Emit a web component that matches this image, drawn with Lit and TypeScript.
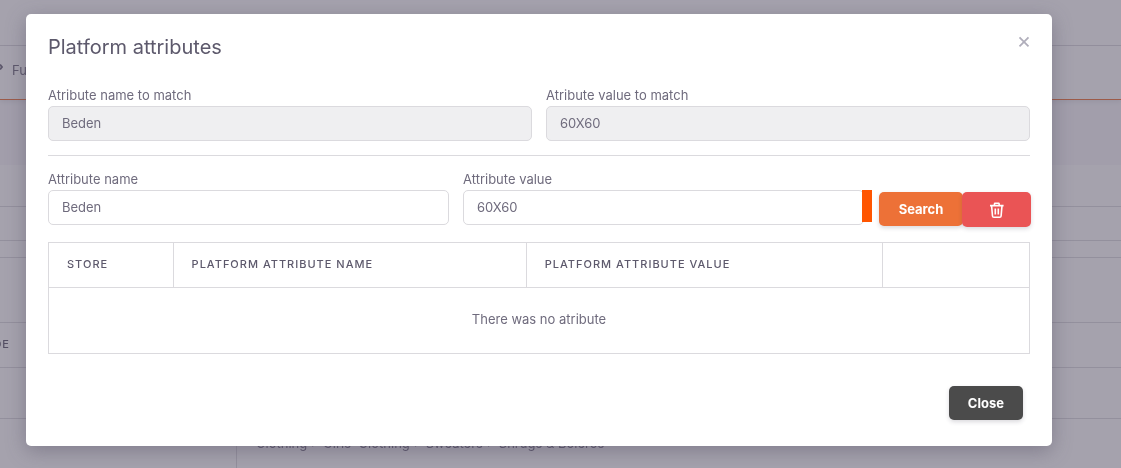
import { LitElement, html, css } from "lit";
import { customElement, state } from "lit/decorators.js";

/** Dimmed product page that stays visible behind the modal. */
@customElement("product-page")
export class ProductPage extends LitElement {
  static styles = css`
    :host {
      display: block;
      height: 100vh;
      overflow: hidden;
      background: #f8f7fa;
      color: #6f6b7d;
      will-change: transform;
    }
    .bar {
      box-sizing: border-box;
      display: flex;
      align-items: center;
      background: #fff;
      border-bottom: 1px solid #dbdade;
    }
    .top { height: 46px; }
    .menu {
      height: 54px;
      gap: 9px;
      padding-bottom: 6px;
      border-bottom-color: #ed7137;
      box-shadow: 0 2px 4px rgba(75, 70, 92, 0.1);
    }
    .arrow { width: 3px; height: 8px; margin-bottom: 6px; }
    .sheet { margin-top: 65px; }
    .h34 { height: 34px; }
    .h42 { height: 42px; }
    .h17 { height: 17px; }
    .h65 { height: 65px; }
    .h45 { height: 45px; }
    .h51 { height: 51px; }
    .code {
      width: 10px;
      display: flex;
      justify-content: flex-end;
      padding-bottom: 2px;
      overflow: hidden;
      font-size: 11px;
      font-weight: 500;
      letter-spacing: 1px;
      color: #5d596c;
    }
    .path { height: 52px; border-bottom: 0; align-items: stretch; }
    .cell { flex: 0 0 236px; border-right: 1px solid #dbdade; }
    .crumbs { padding: 14px 19px; line-height: 20px; white-space: nowrap; }
  `;

  render() {
    return html`
      <div class="bar top"></div>
      <div class="bar menu">
        <svg class="arrow" viewBox="0 0 3 8" fill="none" stroke="currentColor" stroke-width="2">
          <path d="M0 1.5 2 4 0 6.5" />
        </svg>
        <span>Fulfillment</span>
      </div>
      <div class="sheet">
        <div class="bar h42"></div>
        <div class="bar h34"></div>
        <div class="bar h17"></div>
        <div class="bar h65"></div>
        <div class="bar h45"><span class="code">DE</span></div>
        <div class="bar h51"></div>
        <div class="bar path">
          <div class="cell"></div>
          <div class="crumbs">Clothing &gt; Girls' Clothing &gt; Sweaters &gt; Shrugs &amp; Boleros</div>
        </div>
      </div>
    `;
  }
}

@customElement("app-root")
export class AppRoot extends LitElement {
  @state() private attributeName = "Beden";
  @state() private attributeValue = "60X60";

  static styles = css`
    :host {
      display: block;
      font-family: Inter, "Liberation Sans", sans-serif;
      font-size: 13px;
      line-height: 20px;
      color: #6f6b7d;
    }
    .backdrop {
      position: fixed;
      inset: 0;
      overflow: auto;
      background: rgba(75, 70, 92, 0.5);
    }
    .modal {
      margin: 14px 69px 22px 26px;
      padding: 22px 22px 26px;
      border-radius: 5px;
      background: #fff;
      box-shadow: 0 5px 20px rgba(75, 70, 92, 0.4);
    }
    header {
      display: flex;
      justify-content: space-between;
      align-items: flex-start;
      margin-bottom: 28px;
    }
    h1 {
      margin: 0;
      font-size: 20px;
      line-height: 22px;
      font-weight: 400;
      color: #5d596c;
    }
    button {
      border: 0;
      border-radius: 5px;
      font: inherit;
      font-weight: 700;
      color: #fff;
      cursor: pointer;
      box-shadow: 0 2px 4px rgba(75, 70, 92, 0.2);
    }
    .dismiss {
      width: 12px;
      height: 12px;
      padding: 0;
      background: none;
      box-shadow: none;
      color: #b0aebb;
    }
    svg { display: block; }
    .grid {
      display: grid;
      grid-template-columns: repeat(12, minmax(0, 1fr));
      column-gap: 14px;
    }
    .half { grid-column: span 6; }
    .wide { grid-column: span 5; }
    .field { position: relative; }
    label {
      display: block;
      padding-bottom: 2px;
      line-height: 18px;
    }
    input {
      box-sizing: border-box;
      display: block;
      width: 100%;
      height: 35px;
      padding: 0 13px 2px;
      border: 1px solid #dbdade;
      border-radius: 5px;
      background: #fff;
      font: inherit;
      color: #6f6b7d;
      outline: none;
    }
    input:disabled { background: #efeff1; }
    .marker {
      position: absolute;
      top: 20px;
      right: -8px;
      width: 10px;
      height: 32px;
      background: #ff5500;
    }
    hr {
      height: 1px;
      margin: 14px 0;
      border: 0;
      background: #dbdade;
    }
    .actions {
      grid-column: span 2;
      display: flex;
      align-items: flex-start;
      margin: 0 -1px 0 1px;
      padding-top: 22px;
    }
    .search {
      flex: 84 1 0;
      height: 34px;
      padding: 0;
      background: #ed7137;
    }
    .clear {
      flex: 69 1 0;
      display: flex;
      align-items: center;
      justify-content: center;
      height: 35px;
      margin-left: -1px;
      padding: 0;
      background: #ea5455;
    }
    table {
      width: 100%;
      margin-top: 15px;
      border-collapse: collapse;
      table-layout: fixed;
    }
    .store { width: 12.7%; }
    .name { width: 36%; }
    .value { width: 36.3%; }
    th, td { border: 1px solid #dbdade; }
    th {
      height: 42px;
      padding: 0 18px 2px;
      text-align: left;
      font-size: 11px;
      font-weight: 500;
      letter-spacing: 1px;
      text-transform: uppercase;
      color: #5d596c;
    }
    td {
      height: 62px;
      padding: 0 0 3px;
      text-align: center;
    }
    footer {
      display: flex;
      justify-content: flex-end;
      margin-top: 32px;
      padding-right: 7px;
    }
    .close {
      height: 34px;
      padding: 0 19px;
      background: #4b4b4b;
    }
  `;

  private onName(e: Event) {
    this.attributeName = (e.target as HTMLInputElement).value;
  }

  private onValue(e: Event) {
    this.attributeValue = (e.target as HTMLInputElement).value;
  }

  private clear() {
    this.attributeName = "";
    this.attributeValue = "";
  }

  render() {
    return html`
      <product-page aria-hidden="true"></product-page>
      <div class="backdrop">
        <section class="modal" role="dialog" aria-modal="true" aria-labelledby="title">
          <header>
            <h1 id="title">Platform attributes</h1>
            <button class="dismiss" aria-label="Close dialog">
              <svg width="12" height="12" viewBox="0 0 12 12" fill="none" stroke="currentColor" stroke-width="1.8">
                <path d="M1.5 1.3l9 9M10.5 1.3l-9 9" />
              </svg>
            </button>
          </header>

          <div class="grid">
            <div class="field half">
              <label for="match-name">Atribute name to match</label>
              <input id="match-name" value="Beden" disabled />
            </div>
            <div class="field half">
              <label for="match-value">Atribute value to match</label>
              <input id="match-value" value="60X60" disabled />
            </div>
          </div>
          <hr />
          <div class="grid">
            <div class="field wide">
              <label for="name">Attribute name</label>
              <input id="name" .value=${this.attributeName} @input=${this.onName} />
            </div>
            <div class="field wide">
              <label for="value">Attribute value</label>
              <input id="value" .value=${this.attributeValue} @input=${this.onValue} />
              <span class="marker"></span>
            </div>
            <div class="actions">
              <button class="search">Search</button>
              <button class="clear" aria-label="Clear" @click=${this.clear}>
                <svg width="16" height="18" viewBox="0 0 16 18" fill="none" stroke="currentColor" stroke-width="1.6" stroke-linejoin="round">
                  <path d="M1 4.6h13.6M5.2 4.4 5.7 2.3h4.2l.5 2.1M2.6 4.8l.9 10.2a1.4 1.4 0 0 0 1.4 1.3h5.8a1.4 1.4 0 0 0 1.4-1.3l.9-10.2M6.3 7.4v6M9.3 7.4v6" />
                </svg>
              </button>
            </div>
          </div>

          <table>
            <colgroup>
              <col class="store" />
              <col class="name" />
              <col class="value" />
              <col />
            </colgroup>
            <thead>
              <tr>
                <th>Store</th>
                <th>Platform attribute name</th>
                <th>Platform attribute value</th>
                <th></th>
              </tr>
            </thead>
            <tbody>
              <tr>
                <td colspan="4">There was no atribute</td>
              </tr>
            </tbody>
          </table>

          <footer>
            <button class="close">Close</button>
          </footer>
        </section>
      </div>
    `;
  }
}
